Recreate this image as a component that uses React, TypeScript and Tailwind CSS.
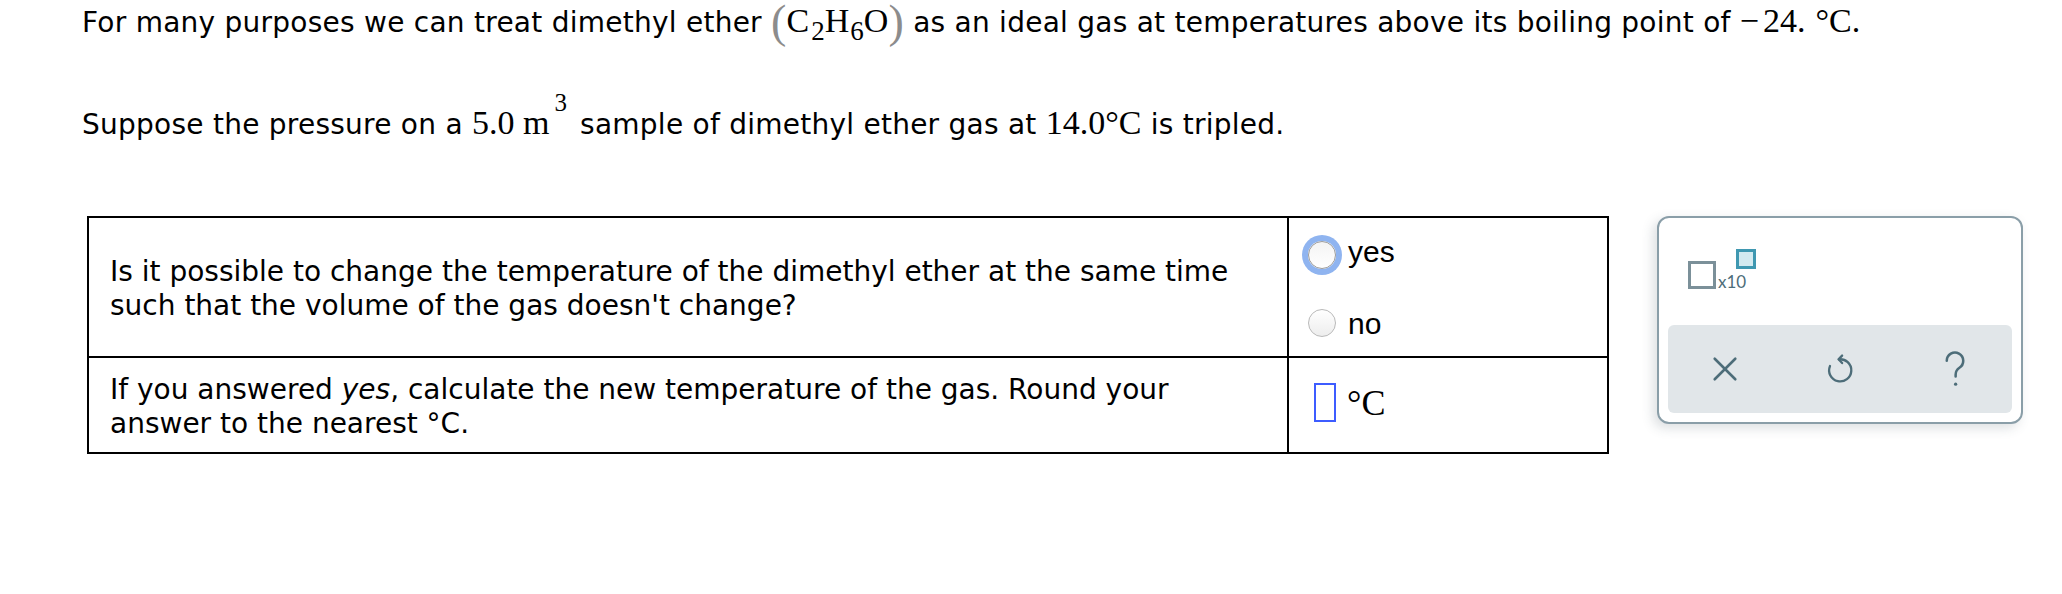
import React from "react";

const serif = "font-['Liberation_Serif',serif]";

function Paren({ ch }: { ch: string }) {
  return (
    <span className={`${serif} relative top-[5px] text-[46px] leading-[0] text-[#8c8c8c] font-light`}>{ch}</span>
  );
}

function XIcon() {
  return (
    <svg width="26" height="26" viewBox="0 0 24 24" fill="none" stroke="#4d6d79" strokeWidth="2.4" strokeLinecap="round">
      <path d="M2.5 2.5 L21.5 21.5 M21.5 2.5 L2.5 21.5" />
    </svg>
  );
}

function UndoIcon() {
  return (
    <svg width="28" height="34" viewBox="0 0 24 29" fill="none" stroke="#4d6d79" strokeWidth="2" strokeLinecap="round" strokeLinejoin="round">
      <path d="M11 6.2 A9.5 9.5 0 1 1 3.4 12" />
      <path d="M13.8 3 L10.8 6.2 L13.8 9.4" />
    </svg>
  );
}

function HelpIcon() {
  return (
    <svg width="26" height="38" viewBox="0 0 20 30" fill="none" stroke="#4d6d79" strokeWidth="2" strokeLinecap="round">
      <path d="M3.5 8.5 A6.5 6.5 0 1 1 13.5 14 C11.2 15.5 10.5 16.8 10.5 19.5 V21" />
      <circle cx="10.5" cy="27" r="1.3" fill="#4d6d79" stroke="none" />
    </svg>
  );
}

export default function App() {
  return (
    <div className="w-[2062px] h-[594px] bg-white text-black font-['DejaVu_Sans','Verdana',sans-serif] pl-[82px] pt-[6px] relative">
      <div className="h-[34px] leading-[34px] text-[28px] tracking-[0.25px] whitespace-nowrap">
        For many purposes we can treat dimethyl ether{" "}
        <Paren ch="(" />
        <span className={`${serif} text-[34px] leading-[0] tracking-normal`}>
          C<span className="relative top-[8px] text-[27px] ml-[2px]">2</span>H<span className="relative top-[8px] text-[27px] ml-[1px]">6</span>O
        </span>
        <Paren ch=")" />{" "}
        as an ideal gas at temperatures above its boiling point of{" "}
        <span className={`${serif} text-[34px] leading-[0] tracking-normal`}>
          −<span className="ml-[4px]">24.</span>
          <span className="ml-[10px]">°C.</span>
        </span>
      </div>

      <div className="mt-[68px] h-[34px] leading-[34px] text-[28px] tracking-[0.25px] whitespace-nowrap">
        Suppose the pressure on a{" "}
        <span className={`${serif} text-[34px] leading-[0] tracking-normal`}>
          5.0 m<span className="relative -top-[23px] text-[25px] ml-[5px] mr-[4px]">3</span>
        </span>{" "}
        sample of dimethyl ether gas at{" "}
        <span className={`${serif} text-[34px] leading-[0] tracking-normal`}>14.0°C</span> is tripled.
      </div>

      <div className="mt-[74px] flex items-start">
        <div className="ml-[5px] w-[1522px] border-2 border-black">
          <div className="flex h-[138px]">
            <div className="w-[1198px] flex items-center px-[21px] text-[28px] leading-[34px] whitespace-nowrap">
              <div className="pt-[3px]">
                Is it possible to change the temperature of the dimethyl ether at the same time
                <br />
                such that the volume of the gas doesn't change?
              </div>
            </div>
            <div className="flex-1 border-l-2 border-black pl-[19px] pt-[23px] font-['Liberation_Sans','Helvetica',sans-serif] text-[30px]">
              <div className="flex items-center h-[28px]">
                <span className="w-[28px] h-[28px] rounded-full border border-[#9a9a9a] bg-gradient-to-b from-[#f4f4f4] to-white ring-[6px] ring-[#8fb4f0]" />
                <span className="ml-[12px] leading-none relative -top-[3px]">yes</span>
              </div>
              <div className="flex items-center h-[28px] mt-[40px]">
                <span className="w-[28px] h-[28px] rounded-full border border-[#b9b9b9] bg-gradient-to-b from-white to-[#ededed]" />
                <span className="ml-[12px] leading-none relative top-[1px]">no</span>
              </div>
            </div>
          </div>
          <div className="flex h-[96px] border-t-2 border-black">
            <div className="w-[1198px] flex items-center px-[21px] text-[28px] leading-[34px] whitespace-nowrap">
              <div className="pt-[3px]">
                If you answered <i>yes</i>, calculate the new temperature of the gas. Round your
                <br />
                answer to the nearest °C.
              </div>
            </div>
            <div className="flex-1 border-l-2 border-black pl-[25px] pt-[25px]">
              <div className="flex items-center">
                <span className="w-[22px] h-[39px] border-2 border-[#3d5cff]" />
                <span className={`${serif} text-[36px] leading-none ml-[11px]`}>°C</span>
              </div>
            </div>
          </div>
        </div>

        <div className="ml-[48px] w-[366px] h-[208px] border-2 border-[#8a9ea8] rounded-[12px] bg-white shadow-[-4px_4px_12px_rgba(60,80,90,0.18)] p-[9px] flex flex-col">
          <div className="flex-1 relative">
            <div className="absolute left-[20px] top-[34px] flex items-end">
              <span className="w-[28px] h-[28px] border-[3px] border-[#7b9099]" />
              <span className="ml-[2px] text-[17px] leading-none text-[#4d6d79] font-['Lato',sans-serif] -mb-[1px]">x10</span>
            </div>
            <span className="absolute left-[68px] top-[22px] w-[20px] h-[20px] border-[3px] border-[#3f98b1] bg-[#d3eaf0]" />
          </div>
          <div className="h-[88px] rounded-[6px] bg-[#e1e6e9] grid grid-cols-3 items-center justify-items-center">
            <XIcon />
            <UndoIcon />
            <HelpIcon />
          </div>
        </div>
      </div>
    </div>
  );
}
